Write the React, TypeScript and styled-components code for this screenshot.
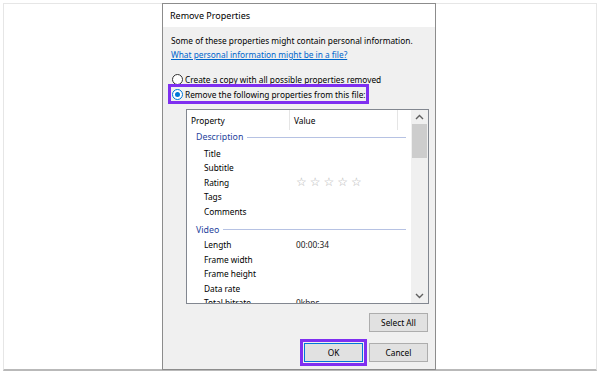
import React from 'react';
import styled, { createGlobalStyle } from 'styled-components';

const GlobalStyle = createGlobalStyle`
  html, body {
    margin: 0;
    padding: 0;
    background: #ffffff;
  }
  body {
    font-family: 'Noto Sans', 'Liberation Sans', sans-serif;
    font-size: 8.2px;
    color: #000;
  }
`;

const colors = {
  highlight: '#7f2ff0',
  dialogBorder: '#8c8c8c',
  face: '#f0f0f0',
  link: '#0066cc',
  groupText: '#1e3f9c',
  groupLine: '#b6c2e3',
  buttonFace: '#e1e1e1',
  buttonBorder: '#adadad',
  focus: '#0078d7',
};

const bodySize = '8.3px';

interface Row {
  label: string;
  value?: string;
  stars?: boolean;
}

interface Group {
  title: string;
  rows: Row[];
}

const groups: Group[] = [
  {
    title: 'Description',
    rows: [
      { label: 'Title' },
      { label: 'Subtitle' },
      { label: 'Rating', stars: true },
      { label: 'Tags' },
      { label: 'Comments' },
    ],
  },
  {
    title: 'Video',
    rows: [
      { label: 'Length', value: '00:00:34' },
      { label: 'Frame width' },
      { label: 'Frame height' },
      { label: 'Data rate' },
      { label: 'Total bitrate', value: '0kbps' },
    ],
  },
];

const Page = styled.div`
  box-sizing: border-box;
  width: 600px;
  height: 373px;
  padding: 3px 3px 2px;
`;

const Frame = styled.div`
  box-sizing: border-box;
  height: 100%;
  border: 1px solid #e6e6e6;
  border-bottom: 2px solid #b9b9b9;
  display: flex;
  justify-content: center;
  padding-right: 2px;
`;

const Dialog = styled.div`
  box-sizing: border-box;
  width: 274px;
  height: 367px;
  margin-top: -1px;
  border: 1px solid ${colors.dialogBorder};
  background: ${colors.face};
  display: flex;
  flex-direction: column;
`;

const TitleBar = styled.div`
  height: 22px;
  padding-bottom: 1px;
  background: #ffffff;
  display: flex;
  align-items: center;
  padding-left: 7px;
  font-size: 9px;
`;

const Body = styled.div`
  display: flex;
  flex-direction: column;
  padding: 7px 7px 0 8px;
  flex: 1;
`;

const Text = styled.div`
  line-height: 14px;
  font-size: ${bodySize};
  white-space: nowrap;
`;

const Link = styled(Text)`
  color: ${colors.link};
  text-decoration: underline;
`;

const RadioRow = styled.label<{ $highlight?: boolean }>`
  display: flex;
  align-items: center;
  gap: 2px;
  height: ${({ $highlight }) => ($highlight ? '20px' : '14px')};
  font-size: ${bodySize};
  white-space: nowrap;
  box-sizing: border-box;
  width: ${({ $highlight }) => ($highlight ? '201px' : 'auto')};
  margin-left: ${({ $highlight }) => ($highlight ? '-3px' : '0')};
  padding-left: 1px;
  border: ${({ $highlight }) => ($highlight ? `3px solid ${colors.highlight}` : 'none')};
  margin-top: ${({ $highlight }) => ($highlight ? '-2px' : '10px')};
`;

const RadioDot = styled.span<{ $checked?: boolean }>`
  box-sizing: border-box;
  width: 11px;
  height: 11px;
  border-radius: 50%;
  border: 1px solid ${({ $checked }) => ($checked ? colors.focus : '#333')};
  background: #fff;
  display: flex;
  align-items: center;
  justify-content: center;
  flex-shrink: 0;

  &::after {
    content: '';
    width: 5px;
    height: 5px;
    border-radius: 50%;
    background: ${({ $checked }) => ($checked ? colors.focus : 'transparent')};
  }
`;

const ListBox = styled.div`
  box-sizing: border-box;
  margin: 5px 0 0 15px;
  width: 243px;
  height: 195px;
  border: 1px solid #828790;
  background: #fff;
  display: flex;
`;

const ListContent = styled.div`
  flex: 1;
  overflow: hidden;
  display: flex;
  flex-direction: column;
`;

const Header = styled.div`
  height: 20px;
  display: flex;
  flex-shrink: 0;
`;

const HeaderCell = styled.div<{ $width: number }>`
  box-sizing: border-box;
  width: ${({ $width }) => $width}px;
  padding-left: 4px;
  border-right: 1px solid #e5e5e5;
  display: flex;
  align-items: center;
  font-size: ${bodySize};
`;

const GroupHeader = styled.div<{ $first?: boolean }>`
  display: flex;
  align-items: center;
  gap: 4px;
  height: 14px;
  flex-shrink: 0;
  margin-top: ${({ $first }) => ($first ? '0' : '4px')};
  margin-bottom: ${({ $first }) => ($first ? '2px' : '1px')};
  padding-left: 9px;
  padding-right: 5px;
  color: ${colors.groupText};
  font-size: 8.8px;

  &::after {
    content: '';
    flex: 1;
    height: 1px;
    background: ${colors.groupLine};
  }
`;

const ItemRow = styled.div`
  display: flex;
  height: 14.5px;
  align-items: center;
  flex-shrink: 0;
  font-size: ${bodySize};
  white-space: nowrap;
`;

const ItemLabel = styled.div`
  width: 109px;
  padding-left: 17px;
  box-sizing: border-box;
`;

const ItemValue = styled.div`
  color: #222;
`;

const Stars = styled.div`
  display: flex;
  gap: 3px;
  color: #b4b4b4;
  font-size: 12px;
  line-height: 1;
  font-family: 'DejaVu Sans', sans-serif;
`;

const ScrollBar = styled.div`
  width: 17px;
  background: #f0f0f0;
  display: flex;
  flex-direction: column;
  align-items: center;
`;

const ScrollArrow = styled.div`
  height: 14px;
  width: 17px;
  display: flex;
  align-items: center;
  justify-content: center;
`;

const ScrollThumb = styled.div`
  width: 15px;
  height: 34px;
  background: #cdcdcd;
`;

const ScrollTrack = styled.div`
  flex: 1;
`;

const ButtonRow = styled.div<{ $top: number }>`
  display: flex;
  justify-content: flex-end;
  gap: 6px;
  margin-top: ${({ $top }) => $top}px;
`;

const Button = styled.div<{ $default?: boolean }>`
  box-sizing: border-box;
  width: 59px;
  height: 19px;
  background: ${colors.buttonFace};
  border: 1px solid ${({ $default }) => ($default ? colors.focus : colors.buttonBorder)};
  display: flex;
  align-items: center;
  justify-content: center;
  font-size: ${bodySize};
`;

const Highlight = styled.div`
  border: 3px solid ${colors.highlight};
  padding: 1px;
  margin: -4px -4px -4px 0;
  display: flex;
`;

const Chevron = ({ up }: { up?: boolean }) => (
  <svg width="9" height="6" viewBox="0 0 9 6">
    <path
      d={up ? 'M1 5 L4.5 1.5 L8 5' : 'M1 1 L4.5 4.5 L8 1'}
      fill="none"
      stroke="#606060"
      strokeWidth="1.4"
    />
  </svg>
);

const App = () => (
  <Page>
    <GlobalStyle />
    <Frame>
      <Dialog>
        <TitleBar>Remove Properties</TitleBar>
        <Body>
          <Text>Some of these properties might contain personal information.</Text>
          <Link>What personal information might be in a file?</Link>
          <RadioRow>
            <RadioDot />
            Create a copy with all possible properties removed
          </RadioRow>
          <RadioRow $highlight>
            <RadioDot $checked />
            Remove the following properties from this file:
          </RadioRow>
          <ListBox>
            <ListContent>
              <Header>
                <HeaderCell $width={103}>Property</HeaderCell>
                <HeaderCell $width={108}>Value</HeaderCell>
              </Header>
              {groups.map((group, gi) => (
                <React.Fragment key={group.title}>
                  <GroupHeader $first={gi === 0}>{group.title}</GroupHeader>
                  {group.rows.map((row) => (
                    <ItemRow key={row.label}>
                      <ItemLabel>{row.label}</ItemLabel>
                      {row.stars ? (
                        <Stars>
                          <span>☆</span>
                          <span>☆</span>
                          <span>☆</span>
                          <span>☆</span>
                          <span>☆</span>
                        </Stars>
                      ) : (
                        <ItemValue>{row.value}</ItemValue>
                      )}
                    </ItemRow>
                  ))}
                </React.Fragment>
              ))}
            </ListContent>
            <ScrollBar>
              <ScrollArrow>
                <Chevron up />
              </ScrollArrow>
              <ScrollThumb />
              <ScrollTrack />
              <ScrollArrow>
                <Chevron />
              </ScrollArrow>
            </ScrollBar>
          </ListBox>
          <ButtonRow $top={9}>
            <Button>Select All</Button>
          </ButtonRow>
          <ButtonRow $top={11}>
            <Highlight>
              <Button $default>OK</Button>
            </Highlight>
            <Button>Cancel</Button>
          </ButtonRow>
        </Body>
      </Dialog>
    </Frame>
  </Page>
);

export default App;
